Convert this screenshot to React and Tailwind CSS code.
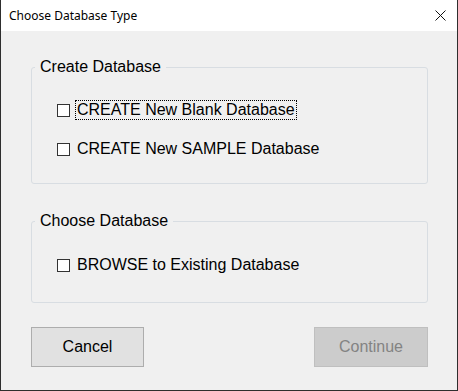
export default function App() {
  const rows1 = [
    { label: 'CREATE New Blank Database', focused: true },
    { label: 'CREATE New SAMPLE Database', focused: false },
  ];

  const Check = ({ label, focused }) => (
    <label className="flex items-center h-[20px]">
      <span className="w-[13px] h-[13px] border border-[#333333] bg-white shrink-0" />
      <span
        className={
          'ml-[5px] px-[1px] h-[20px] flex items-center leading-[18px] border border-dotted ' +
          (focused ? 'border-black' : 'border-transparent')
        }
      >
        {label}
      </span>
    </label>
  );

  return (
    <div
      className="w-[458px] h-[391px] flex flex-col bg-[#f0f0f0] border-l border-r border-b border-[#2e2e2e] text-black"
      style={{ fontFamily: '"Liberation Sans", Arial, sans-serif' }}
    >
      {/* title bar */}
      <div className="h-[31px] bg-white flex items-center justify-between pl-[8px] pr-[10px] shrink-0">
        <span className="text-[12px] text-black" style={{ fontFamily: '"Noto Sans", sans-serif' }}>
          Choose Database Type
        </span>
        <svg width="11" height="11" viewBox="0 0 11 11" className="mr-[1px]">
          <path d="M0.5 0.5L10.5 10.5M10.5 0.5L0.5 10.5" stroke="#111" strokeWidth="1" />
        </svg>
      </div>

      <div className="flex flex-col pl-[30px] pr-[29px] pt-[27px]">
        <fieldset className="h-[126px] border border-[#d8dde2] rounded-[3px] m-0 p-0">
          <legend className="ml-[3px] px-[5px] text-[16px] leading-[18px]">Create Database</legend>
          <div className="flex flex-col gap-[19px] pl-[25px] pt-[24px] text-[16px]">
            {rows1.map((r) => (
              <Check key={r.label} {...r} />
            ))}
          </div>
        </fieldset>

        <fieldset className="h-[91px] mt-[28px] border border-[#d8dde2] rounded-[3px] m-0 p-0">
          <legend className="ml-[3px] px-[5px] text-[16px] leading-[18px]">Choose Database</legend>
          <div className="flex flex-col pl-[25px] pt-[25px] text-[16px]">
            <Check label="BROWSE to Existing Database" focused={false} />
          </div>
        </fieldset>

        <div className="flex justify-between mt-[24px] text-[16px]">
          <button className="w-[113px] h-[40px] bg-[#e1e1e1] border border-[#adadad] text-black">
            Cancel
          </button>
          <button disabled className="w-[114px] h-[40px] bg-[#cccccc] border border-[#bfbfbf] text-[#838383]">
            Continue
          </button>
        </div>
      </div>
    </div>
  );
}
